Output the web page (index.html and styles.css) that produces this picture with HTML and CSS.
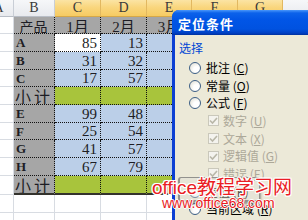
FILE: index.html
```html
<!DOCTYPE html>
<html>
<head>
<meta charset="utf-8">
<link rel="stylesheet" href="styles.css">
</head>
<body>
<div class="sheet">
  <div class="grid">
    <div class="h">A</div><div class="h">B</div><div class="h sel">C</div><div class="h sel">D</div><div class="h sel">E</div><div class="h sel">F</div><div class="h sel">G</div><div class="h">H</div>

    <div class="c"></div><div class="c lbl ctr">产品</div><div class="c gray ctr">1月</div><div class="c gray ctr">2月</div><div class="c gray ctr">3月</div><div class="c gray"></div><div class="c gray"></div><div class="c"></div>

    <div class="c"></div><div class="c lbl">A</div><div class="c act">85</div><div class="c blue">13</div><div class="c blue"></div><div class="c blue"></div><div class="c blue"></div><div class="c"></div>
    <div class="c"></div><div class="c lbl">B</div><div class="c blue">31</div><div class="c blue">32</div><div class="c blue"></div><div class="c blue"></div><div class="c blue"></div><div class="c"></div>
    <div class="c"></div><div class="c lbl">C</div><div class="c blue">17</div><div class="c blue">57</div><div class="c blue"></div><div class="c blue"></div><div class="c blue"></div><div class="c"></div>
    <div class="c"></div><div class="c lbl sub">小计</div><div class="c green"></div><div class="c green"></div><div class="c green"></div><div class="c green"></div><div class="c green"></div><div class="c"></div>
    <div class="c"></div><div class="c lbl">E</div><div class="c blue">99</div><div class="c blue">48</div><div class="c blue"></div><div class="c blue"></div><div class="c blue"></div><div class="c"></div>
    <div class="c"></div><div class="c lbl">F</div><div class="c blue">25</div><div class="c blue">54</div><div class="c blue"></div><div class="c blue"></div><div class="c blue"></div><div class="c"></div>
    <div class="c"></div><div class="c lbl">G</div><div class="c blue">41</div><div class="c blue">57</div><div class="c blue"></div><div class="c blue"></div><div class="c blue"></div><div class="c"></div>
    <div class="c"></div><div class="c lbl">H</div><div class="c blue">67</div><div class="c blue">79</div><div class="c blue"></div><div class="c blue"></div><div class="c blue"></div><div class="c"></div>
    <div class="c"></div><div class="c lbl sub last">小计</div><div class="c green last"></div><div class="c green last"></div><div class="c green last"></div><div class="c green last"></div><div class="c green last"></div><div class="c"></div>

    <div class="c"></div><div class="c"></div><div class="c"></div><div class="c"></div><div class="c"></div><div class="c"></div><div class="c"></div><div class="c"></div>
    <div class="c"></div><div class="c"></div><div class="c"></div><div class="c"></div><div class="c"></div><div class="c"></div><div class="c"></div><div class="c"></div>
  </div>

  <div class="dialog">
    <div class="title">定位条件</div>
    <div class="dbody">
      <div class="cap">选择</div>
      <div class="opts">
        <div class="opt"><span class="radio"></span><span>批注 (<u>C</u>)</span></div>
        <div class="opt"><span class="radio"></span><span>常量 (<u>O</u>)</span></div>
        <div class="opt"><span class="radio"></span><span>公式 (<u>F</u>)</span></div>
        <div class="opt dis"><span class="check"><svg width="11" height="11" viewBox="0 0 11 11"><polyline points="2,5.5 4.5,8 9,3" fill="none" stroke="#b9b7a8" stroke-width="1.6"/></svg></span><span>数字 (<u>U</u>)</span></div>
        <div class="opt dis"><span class="check"><svg width="11" height="11" viewBox="0 0 11 11"><polyline points="2,5.5 4.5,8 9,3" fill="none" stroke="#b9b7a8" stroke-width="1.6"/></svg></span><span>文本 (<u>X</u>)</span></div>
        <div class="opt dis"><span class="check"><svg width="11" height="11" viewBox="0 0 11 11"><polyline points="2,5.5 4.5,8 9,3" fill="none" stroke="#b9b7a8" stroke-width="1.6"/></svg></span><span>逻辑值 (<u>G</u>)</span></div>
        <div class="opt dis"><span class="check"><svg width="11" height="11" viewBox="0 0 11 11"><polyline points="2,5.5 4.5,8 9,3" fill="none" stroke="#b9b7a8" stroke-width="1.6"/></svg></span><span>错误 (<u>E</u>)</span></div>
        <div class="opt"><span class="radio"></span><span>空值 (<u>K</u>)</span></div>
        <div class="opt"><span class="radio"></span><span>当前区域 (<u>R</u>)</span></div>
      </div>
    </div>
  </div>

  <div class="wm-box"></div>
  <div class="wm1">office教程学习网</div>
  <div class="wm2">www.office68.com</div>
</div>
</body>
</html>
```

FILE: styles.css
```css
html, body {
  margin: 0;
  padding: 0;
  overflow: hidden;
  background: #fff;
}

.sheet {
  position: relative;
  width: 308px;
  height: 220px;
  overflow: hidden;
  background: #fff;
}

.grid {
  display: grid;
  grid-template-columns: 30px 41px 46px 46px 45px 46px 45px 60px;
  grid-template-rows: 17px 17px 18px 18px 17px 18px 18px 17px 18px 18px 19px 18px 18px;
  margin-left: -16px;
}

.h {
  box-sizing: border-box;
  display: flex;
  align-items: center;
  justify-content: center;
  background: linear-gradient(#f6f7f9, #e8eaee);
  border-right: 1px solid #c9ced6;
  border-bottom: 1px solid #b9bec6;
  font: 14px "Liberation Serif", serif;
  color: #3a3a3a;
}

.h.sel {
  background: linear-gradient(#fbe4a4, #f9d67e 45%, #f6cb62);
  border-right-color: #e2b860;
  border-bottom-color: #d6a848;
}

.c {
  box-sizing: border-box;
  display: flex;
  align-items: center;
  justify-content: flex-end;
  padding: 1px 3px 0 3px;
  border-right: 1px solid #d8dce2;
  border-bottom: 1px solid #d8dce2;
  font: 15px "Liberation Serif", "Noto Sans CJK SC", serif;
  color: #1d1d24;
  white-space: nowrap;
  overflow: hidden;
}

.lbl, .gray, .blue, .act, .green {
  border-right: 1px dotted #111;
  border-bottom: 1px dotted #111;
}

.lbl {
  background: #a6a6a6;
  justify-content: flex-start;
  padding-left: 2px;
  font-size: 13px;
  font-weight: bold;
}

.lbl.ctr {
  justify-content: center;
  font-weight: normal;
  font-size: 14px;
}

.lbl.sub {
  font-weight: normal;
  font-size: 16px;
  letter-spacing: 3px;
  padding: 0 0 0 1px;
}

.gray {
  background: #a6a6a6;
}

.ctr {
  justify-content: center;
}

.blue {
  background: #bbcfe8;
}

.act {
  background: #fff;
}

.green {
  background: #a8c43c;
}

.last {
  border-bottom: 2px solid #33322c;
}

/* dialog */
.dialog {
  position: absolute;
  left: 172px;
  top: 10px;
  width: 160px;
  height: 230px;
  background: #0c3fd3;
  border-top-left-radius: 7px;
  overflow: hidden;
  display: flex;
  flex-direction: column;
}

.title {
  height: 25px;
  flex: none;
  box-sizing: border-box;
  padding: 1px 0 0 6px;
  display: flex;
  align-items: center;
  background: linear-gradient(#4a97fb 0, #0c62ea 3px, #0155e6 10px, #0052e0 19px, #0040c4 23px, #00319e 25px);
  color: #fff;
  font: bold 13px "Noto Sans CJK SC", sans-serif;
  letter-spacing: 1px;
}

.dbody {
  flex: 1;
  margin-left: 3px;
  background: #ece9d8;
  padding: 6px 0 0 4px;
  font: 12px "Noto Sans CJK SC", sans-serif;
}

.cap {
  color: #0046d5;
  line-height: 14px;
  height: 14px;
}

.opts {
  margin-top: 4px;
  display: flex;
  flex-direction: column;
}

.opt {
  height: 17.7px;
  display: flex;
  align-items: center;
  padding-left: 10px;
  color: #000;
  line-height: 14px;
  white-space: nowrap;
}

.opt u {
  text-decoration: underline;
}

.radio {
  box-sizing: border-box;
  width: 12px;
  height: 12px;
  border-radius: 50%;
  border: 1px solid #3d5f86;
  background: radial-gradient(circle at 65% 65%, #ffffff 30%, #e6e4da 80%);
  margin-right: 5px;
  flex: none;
}

.opt.dis {
  padding-left: 29px;
  color: #aca899;
}

.check {
  box-sizing: border-box;
  width: 11px;
  height: 11px;
  border: 1px solid #cac8bb;
  background: #f4f3ee;
  margin-right: 4px;
  flex: none;
  display: flex;
}

.check svg {
  margin: -1px;
}

/* watermark */
.wm-box {
  position: absolute;
  left: 178px;
  top: 177px;
  width: 82px;
  height: 25px;
  box-sizing: border-box;
  border-radius: 3px;
  border: 1px solid rgba(110, 110, 110, 0.7);
  border-bottom-width: 2px;
  border-left-width: 2px;
  background: rgba(220, 220, 215, 0.35);
  box-shadow: 1px 2px 2px rgba(80, 80, 80, 0.5);
}

.wm1 {
  position: absolute;
  left: 152px;
  top: 172px;
  font: 19px "Liberation Sans", "Noto Sans CJK SC", sans-serif;
  color: #ea1c24;
  white-space: nowrap;
  text-shadow: 1px 0 #fff, -1px 0 #fff, 0 1px #fff, 0 -1px #fff, 1px 1px #fff, -1px -1px #fff, 1px -1px #fff, -1px 1px #fff;
}

.wm2 {
  position: absolute;
  left: 162px;
  top: 195px;
  font: 14px "Liberation Sans", sans-serif;
  color: #ea1c24;
  white-space: nowrap;
  text-shadow: 1px 0 #fff, -1px 0 #fff, 0 1px #fff, 0 -1px #fff;
}
```
